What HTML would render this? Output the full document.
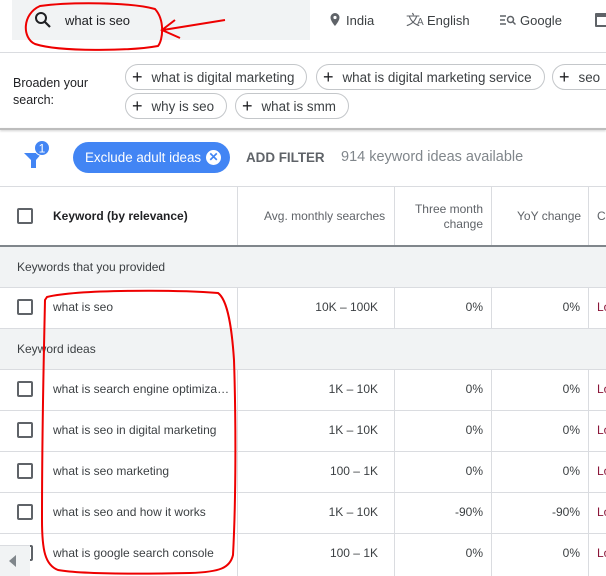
<!DOCTYPE html>
<html><head><style>
*{margin:0;padding:0;box-sizing:border-box}
body{width:606px;height:576px;overflow:hidden;background:#fff;font-family:"Liberation Sans",Arial,sans-serif;position:relative;color:#3c4043}
.a{position:absolute;white-space:nowrap}
.chip{position:absolute;height:26px;border:1px solid #c4c7ca;border-radius:13px;font-size:13.4px;line-height:24px;padding:0 12px 0 6px;color:#3c4043}
.chip b{font-weight:normal;font-size:18px;margin-right:9px;color:#202124;vertical-align:-1px}
.hl{position:absolute;left:0;width:606px;height:1px;background:#dadce0}
.vl{position:absolute;width:1px;background:#dadce0}
.cb{position:absolute;left:17px;width:16px;height:16px;border:2px solid #5f6368;border-radius:2px}
.kw{position:absolute;left:53px;font-size:12px}
.n{position:absolute;font-size:12px;text-align:right}
.sec{position:absolute;left:0;width:606px;height:40px;background:#f1f3f4;font-size:12px;line-height:40px;padding-left:17px}
.lo{position:absolute;left:597px;font-size:12px;color:#8a1538}
</style></head><body>
<div class="a" style="left:12px;top:0;width:298px;height:40px;background:#f1f3f4"></div>
<svg class="a" style="left:34px;top:11px" width="18" height="18" viewBox="0 0 18 18"><circle cx="7" cy="7" r="5" fill="none" stroke="#202124" stroke-width="2"/><path d="M11 11l5 5" stroke="#202124" stroke-width="2.2"/></svg>
<div class="a" style="left:65px;top:13px;font-size:13px;color:#202124">what is seo</div>
<svg class="a" style="left:329px;top:12px" width="12" height="16" viewBox="0 0 12 16"><path d="M6 1a4.5 4.5 0 0 0-4.5 4.5C1.5 9 6 14 6 14s4.5-5 4.5-8.5A4.5 4.5 0 0 0 6 1z" fill="#5f6368"/><circle cx="6" cy="5.5" r="1.6" fill="#fff"/></svg>
<div class="a" style="left:346px;top:13px;font-size:13px">India</div>
<div class="a" style="left:406px;top:10px;font-size:14px;color:#5f6368">文<span style="font-size:10px;margin-left:-3px">A</span></div>
<div class="a" style="left:427px;top:13px;font-size:13px">English</div>
<svg class="a" style="left:500px;top:14px" width="16" height="12" viewBox="0 0 16 12" fill="none" stroke="#5f6368" stroke-width="1.5"><path d="M0 2h6M0 6h5M0 10h6"/><circle cx="10.5" cy="5.5" r="3"/><path d="M12.5 7.5l3 3"/></svg>
<div class="a" style="left:520px;top:13px;font-size:13px">Google</div>
<div class="a" style="left:595px;top:13px;width:14px;height:14px;border:2px solid #5f6368;border-top-width:4px;border-radius:1px"></div>
<div class="hl" style="top:52px"></div>
<div class="a" style="left:13px;top:75px;font-size:12.5px;line-height:17px;color:#202124">Broaden your<br>search:</div>
<div class="chip" style="left:125px;top:64px"><b>+</b>what is digital marketing</div>
<div class="chip" style="left:316px;top:64px"><b>+</b>what is digital marketing service</div>
<div class="chip" style="left:552px;top:64px;width:80px"><b>+</b>seo</div>
<div class="chip" style="left:125px;top:93px"><b>+</b>why is seo</div>
<div class="chip" style="left:235px;top:93px"><b>+</b>what is smm</div>
<div class="a" style="left:0;top:128px;width:606px;height:2px;background:#bdbdbd;box-shadow:0 1px 2px rgba(0,0,0,.2)"></div>
<svg class="a" style="left:22px;top:139px" width="32" height="32" viewBox="0 0 32 32"><path d="M2 14h18l-6 7v8h-5v-8z" fill="#4285f4"/><circle cx="20" cy="9" r="7.5" fill="#4285f4" stroke="#fff" stroke-width="1"/><text x="20" y="13.5" font-size="12" fill="#fff" text-anchor="middle" font-family="Liberation Sans">1</text></svg>
<div class="a" style="left:73px;top:142px;width:157px;height:31px;border-radius:16px;background:#4285f4;color:#fff;font-size:13.4px;line-height:31px;padding-left:12px">Exclude adult ideas<span style="position:absolute;left:133px;top:8px;width:15px;height:15px;border-radius:50%;background:#fff;color:#4285f4;font-size:12px;line-height:15px;text-align:center;font-weight:bold">✕</span></div>
<div class="a" style="left:246px;top:150px;font-size:13.4px;font-weight:bold;color:#5f6368">ADD FILTER</div>
<div class="a" style="left:341px;top:149px;font-size:14.5px;color:#80868b">914 keyword ideas available</div>
<div class="hl" style="top:186px"></div>
<div class="vl" style="left:237px;top:186px;height:59px"></div>
<div class="vl" style="left:394px;top:186px;height:59px"></div>
<div class="vl" style="left:491px;top:186px;height:59px"></div>
<div class="vl" style="left:588px;top:186px;height:59px"></div>
<div class="cb" style="top:208px"></div>
<div class="a" style="left:53px;top:209px;font-size:12px;font-weight:bold;color:#202124">Keyword (by relevance)</div>
<div class="a" style="left:264px;top:209px;font-size:12px;color:#5f6368">Avg. monthly searches</div>
<div class="a" style="left:400px;top:202px;width:83px;font-size:12px;color:#5f6368;text-align:right;line-height:15px">Three month<br>change</div>
<div class="a" style="left:517px;top:209px;font-size:12px;color:#5f6368">YoY change</div>
<div class="a" style="left:597px;top:209px;font-size:12px;color:#5f6368">Co</div>
<div class="a" style="left:0;top:245px;width:606px;height:2px;background:#80868b"></div>
<div class="sec" style="top:247px">Keywords that you provided</div>
<div class="hl" style="top:287px"></div>
<div class="sec" style="top:329px">Keyword ideas</div>
<div class="hl" style="top:328px"></div>
<div class="hl" style="top:369px"></div>
<div class="hl" style="top:410px"></div>
<div class="hl" style="top:451px"></div>
<div class="hl" style="top:492px"></div>
<div class="hl" style="top:533px"></div>
<div class="vl" style="left:237px;top:288px;height:40px"></div><div class="vl" style="left:394px;top:288px;height:40px"></div><div class="vl" style="left:491px;top:288px;height:40px"></div><div class="vl" style="left:588px;top:288px;height:40px"></div>
<div class="vl" style="left:394px;top:370px;height:206px"></div><div class="vl" style="left:491px;top:370px;height:206px"></div><div class="vl" style="left:588px;top:370px;height:206px"></div><div class="vl" style="left:237px;top:370px;height:206px"></div>

<div class="cb" style="top:299px"></div><div class="kw" style="top:300px">what is seo</div><div class="n" style="left:280px;width:98px;top:300px">10K – 100K</div><div class="n" style="left:400px;width:83px;top:300px">0%</div><div class="n" style="left:497px;width:83px;top:300px">0%</div><div class="lo" style="top:300px">Lo</div>

<div class="cb" style="top:381px"></div><div class="kw" style="top:382px">what is search engine optimiza…</div><div class="n" style="left:280px;width:98px;top:382px">1K – 10K</div><div class="n" style="left:400px;width:83px;top:382px">0%</div><div class="n" style="left:497px;width:83px;top:382px">0%</div><div class="lo" style="top:382px">Lo</div>
<div class="cb" style="top:422px"></div><div class="kw" style="top:423px">what is seo in digital marketing</div><div class="n" style="left:280px;width:98px;top:423px">1K – 10K</div><div class="n" style="left:400px;width:83px;top:423px">0%</div><div class="n" style="left:497px;width:83px;top:423px">0%</div><div class="lo" style="top:423px">Lo</div>
<div class="cb" style="top:463px"></div><div class="kw" style="top:464px">what is seo marketing</div><div class="n" style="left:280px;width:98px;top:464px">100 – 1K</div><div class="n" style="left:400px;width:83px;top:464px">0%</div><div class="n" style="left:497px;width:83px;top:464px">0%</div><div class="lo" style="top:464px">Lo</div>
<div class="cb" style="top:504px"></div><div class="kw" style="top:505px">what is seo and how it works</div><div class="n" style="left:280px;width:98px;top:505px">1K – 10K</div><div class="n" style="left:400px;width:83px;top:505px">-90%</div><div class="n" style="left:497px;width:83px;top:505px">-90%</div><div class="lo" style="top:505px">Lo</div>
<div class="cb" style="top:545px"></div><div class="kw" style="top:546px">what is google search console</div><div class="n" style="left:280px;width:98px;top:546px">100 – 1K</div><div class="n" style="left:400px;width:83px;top:546px">0%</div><div class="n" style="left:497px;width:83px;top:546px">0%</div><div class="lo" style="top:546px">Lo</div>
<div class="a" style="left:0;top:545px;width:30px;height:31px;background:#f1f3f4;border-top:1px solid #dadce0"></div>
<div class="a" style="left:9px;top:555px;width:0;height:0;border-top:6px solid transparent;border-bottom:6px solid transparent;border-right:7px solid #80868b"></div>

<svg class="a" style="left:0;top:0" width="606" height="576" viewBox="0 0 606 576" fill="none" stroke="#e00" stroke-width="2">
<path d="M40 6C70 2 130 2 155 9C165 20 163 40 158 46C130 51 60 52 35 44C22 38 22 14 40 6z"/>
<path d="M225 20L163 30M175 20L162 30L180 38"/>
<path d="M47 297C80 289 180 290 218 293C228 300 232 330 234 360C236 420 236 500 233 555C230 568 220 572 190 573C140 574 80 574 58 570C45 565 42 550 42 520C42 420 44 350 45 300z"/>
</svg>
</body></html>
